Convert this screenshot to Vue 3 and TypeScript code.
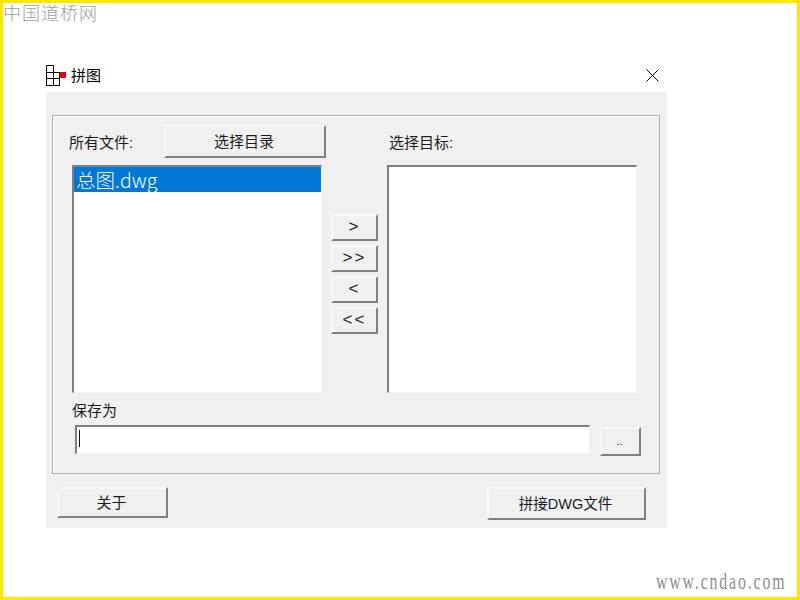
<script setup lang="ts">
const moves: string[] = ['>', '>>', '<', '<<']
</script>

<template>
  <div class="frame">
    <div class="mark-cn">中国道桥网</div>
    <div class="window">
      <div class="titlebar">
        <svg class="logo" width="21" height="21" viewBox="0 0 21 21">
          <path d="M.5.5h7v20h-7zM.5 7.5h13v13h-13zM.5 13.5h13" fill="none" stroke="#000" />
          <rect x="13" y="7" width="7" height="6" fill="#f00000" />
          <path d="M13.5 7v6" stroke="#000" />
        </svg>
        <span class="title">拼图</span>
        <svg class="close" width="13" height="13" viewBox="0 0 13 13">
          <path d="M.5.5l12 12M12.5.5l-12 12" stroke="#111" fill="none" />
        </svg>
      </div>
      <div class="dialog">
        <div class="group">
          <div class="columns">
            <div class="col">
              <div class="head">
                <span class="label all">所有文件:</span>
                <button class="btn pick">选择目录</button>
              </div>
              <div class="list">
                <div class="row">总图.dwg</div>
              </div>
            </div>
            <div class="moves">
              <button v-for="m in moves" :key="m" class="btn move">{{ m }}</button>
            </div>
            <div class="col">
              <div class="head">
                <span class="label target">选择目标:</span>
              </div>
              <div class="list"></div>
            </div>
          </div>
          <div class="label save-label">保存为</div>
          <div class="save-row">
            <div class="input"><i class="caret"></i></div>
            <button class="btn dots">..</button>
          </div>
        </div>
        <div class="actions">
          <button class="btn about">关于</button>
          <button class="btn merge">拼接DWG文件</button>
        </div>
      </div>
    </div>
    <div class="mark-url">www.cndao.com</div>
  </div>
</template>

<style>
html, body { margin: 0; background: #fff; }
</style>

<style scoped>
.frame {
  position: relative;
  box-sizing: border-box;
  width: 800px;
  height: 600px;
  border: 3px solid #ffe600;
  background: #fff;
  overflow: hidden;
  font-family: "Liberation Sans", "Noto Sans CJK SC", sans-serif;
  color: #1c1c1c;
}
.mark-cn {
  position: absolute;
  left: 0;
  top: -4px;
  font-family: "Noto Sans CJK SC", sans-serif;
  font-weight: 300;
  font-size: 18px;
  line-height: 26px;
  letter-spacing: 1px;
  color: #a0a0a0;
}
.mark-url {
  position: absolute;
  left: 653px;
  top: 566px;
  font-family: "Liberation Serif", serif;
  font-size: 24px;
  line-height: 24px;
  letter-spacing: 2.8px;
  color: #8e8e8e;
  transform: scaleX(0.66);
  transform-origin: left center;
  white-space: nowrap;
}
.window {
  width: 621px;
  margin: 56px 0 0 43px;
}
.titlebar {
  display: flex;
  align-items: center;
  height: 33px;
}
.logo { margin: 0 4px 0 0; }
.title { font-size: 15px; color: #000; margin-top: -2px; }
.close { margin-left: auto; margin-right: 8px; margin-top: -1px; }
.dialog {
  background: #f0f0f0;
  height: 436px;
  box-sizing: border-box;
  padding: 23px 7px 0 6px;
}
.group {
  box-sizing: border-box;
  height: 359px;
  padding: 9px 0 0 19px;
  border: 1px solid #b0b0b0;
  box-shadow: inset 1px 1px 0 #fff;
}
.columns { display: flex; }
.col { width: 250px; }
.head {
  display: flex;
  align-items: center;
  height: 33px;
  margin-bottom: 7px;
}
.label { font-size: 15px; }
.all { margin-left: -3px; width: 95px; flex: none; }
.target { margin-left: 2px; }
.list {
  box-sizing: border-box;
  height: 228px;
  padding: 0;
  background: #fff;
  border-style: solid;
  border-width: 2px 1px 1px 2px;
  border-color: #808080 #f4f4f4 #f4f4f4 #808080;
}
.row {
  height: 25px;
  line-height: 25px;
  padding-left: 2px;
  background: #0078d7;
  color: #fff;
  font-family: "Noto Sans CJK SC", sans-serif;
  font-weight: 300;
  font-size: 19.5px;
}
.moves {
  display: flex;
  flex-direction: column;
  gap: 4px;
  width: 47px;
  margin: 89px 9px 0 9px;
}
.btn {
  display: block;
  flex: none;
  box-sizing: border-box;
  padding: 0 2px 2px 0;
  background: #f0f0f0;
  border: 2px solid;
  border-color: #f8f8f8 #808080 #808080 #f8f8f8;
  font-family: inherit;
  font-size: 15px;
  color: #1c1c1c;
}
.pick { width: 162px; height: 33px; }
.move { width: 47px; height: 27px; padding-right: 0; font-size: 17px; letter-spacing: 2px; }
.save-label { margin: 8px 0 0 0; line-height: 20px; height: 24px; }
.save-row { display: flex; align-items: flex-start; margin-left: 3px; }
.input {
  box-sizing: border-box;
  width: 515px;
  height: 29px;
  padding: 3px 0 0 2px;
  background: #fff;
  border-style: solid;
  border-width: 2px 1px 1px 2px;
  border-color: #808080 #f4f4f4 #f4f4f4 #808080;
}
.caret { display: block; width: 1px; height: 17px; background: #111; }
.dots { width: 41px; height: 29px; margin: 2px 0 0 10px; font-size: 11px; }
.actions {
  display: flex;
  justify-content: space-between;
  align-items: flex-start;
  margin: 13px 14px 0 5px;
}
.about { width: 111px; height: 31px; }
.merge { width: 159px; height: 33px; font-size: 14.5px; }
</style>
